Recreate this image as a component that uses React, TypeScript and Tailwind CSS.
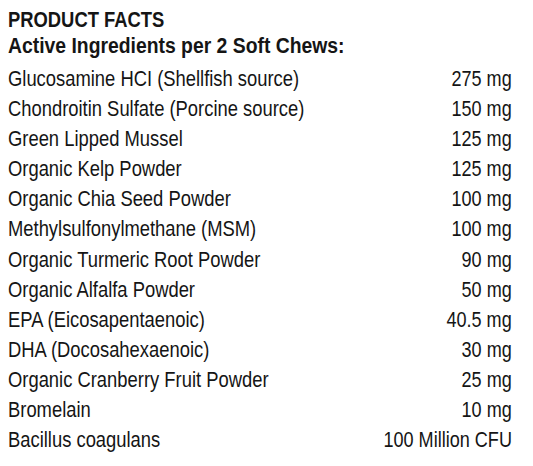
import React from 'react';

const rows = [
  { name: 'Glucosamine HCI (Shellfish source)', amount: '275 mg' },
  { name: 'Chondroitin Sulfate (Porcine source)', amount: '150 mg' },
  { name: 'Green Lipped Mussel', amount: '125 mg' },
  { name: 'Organic Kelp Powder', amount: '125 mg' },
  { name: 'Organic Chia Seed Powder', amount: '100 mg' },
  { name: 'Methylsulfonylmethane (MSM)', amount: '100 mg' },
  { name: 'Organic Turmeric Root Powder', amount: '90 mg' },
  { name: 'Organic Alfalfa Powder', amount: '50 mg' },
  { name: 'EPA (Eicosapentaenoic)', amount: '40.5 mg' },
  { name: 'DHA (Docosahexaenoic)', amount: '30 mg' },
  { name: 'Organic Cranberry Fruit Powder', amount: '25 mg' },
  { name: 'Bromelain', amount: '10 mg' },
  { name: 'Bacillus coagulans', amount: '100 Million CFU' },
];

const App: React.FC = () => {
  return (
    <div className="w-[533px] h-[466px] bg-white text-[#151515] pl-[8px] pr-[21px] pt-[7px] font-['Liberation_Sans',Arial,sans-serif]">
      {/* condensed face isn't installed, so squeeze Liberation Sans */}
      <h1 className="text-[21.5px] leading-[26px] font-bold">
        <span className="inline-block origin-left scale-x-[0.855]">PRODUCT FACTS</span>
      </h1>
      <h2 className="text-[21.5px] leading-[26px] font-bold mb-[5px]">
        <span className="inline-block origin-left scale-x-[0.9]">Active Ingredients per 2 Soft Chews:</span>
      </h2>
      <div className="flex flex-col">
        {rows.map((row, i) => (
          <div key={i} className="flex justify-between items-baseline text-[21.5px] leading-[30.1px]">
            <span className="inline-block origin-left scale-x-[0.855] whitespace-nowrap">{row.name}</span>
            <span className="inline-block origin-right scale-x-[0.84] whitespace-nowrap">{row.amount}</span>
          </div>
        ))}
      </div>
    </div>
  );
};

export default App;
